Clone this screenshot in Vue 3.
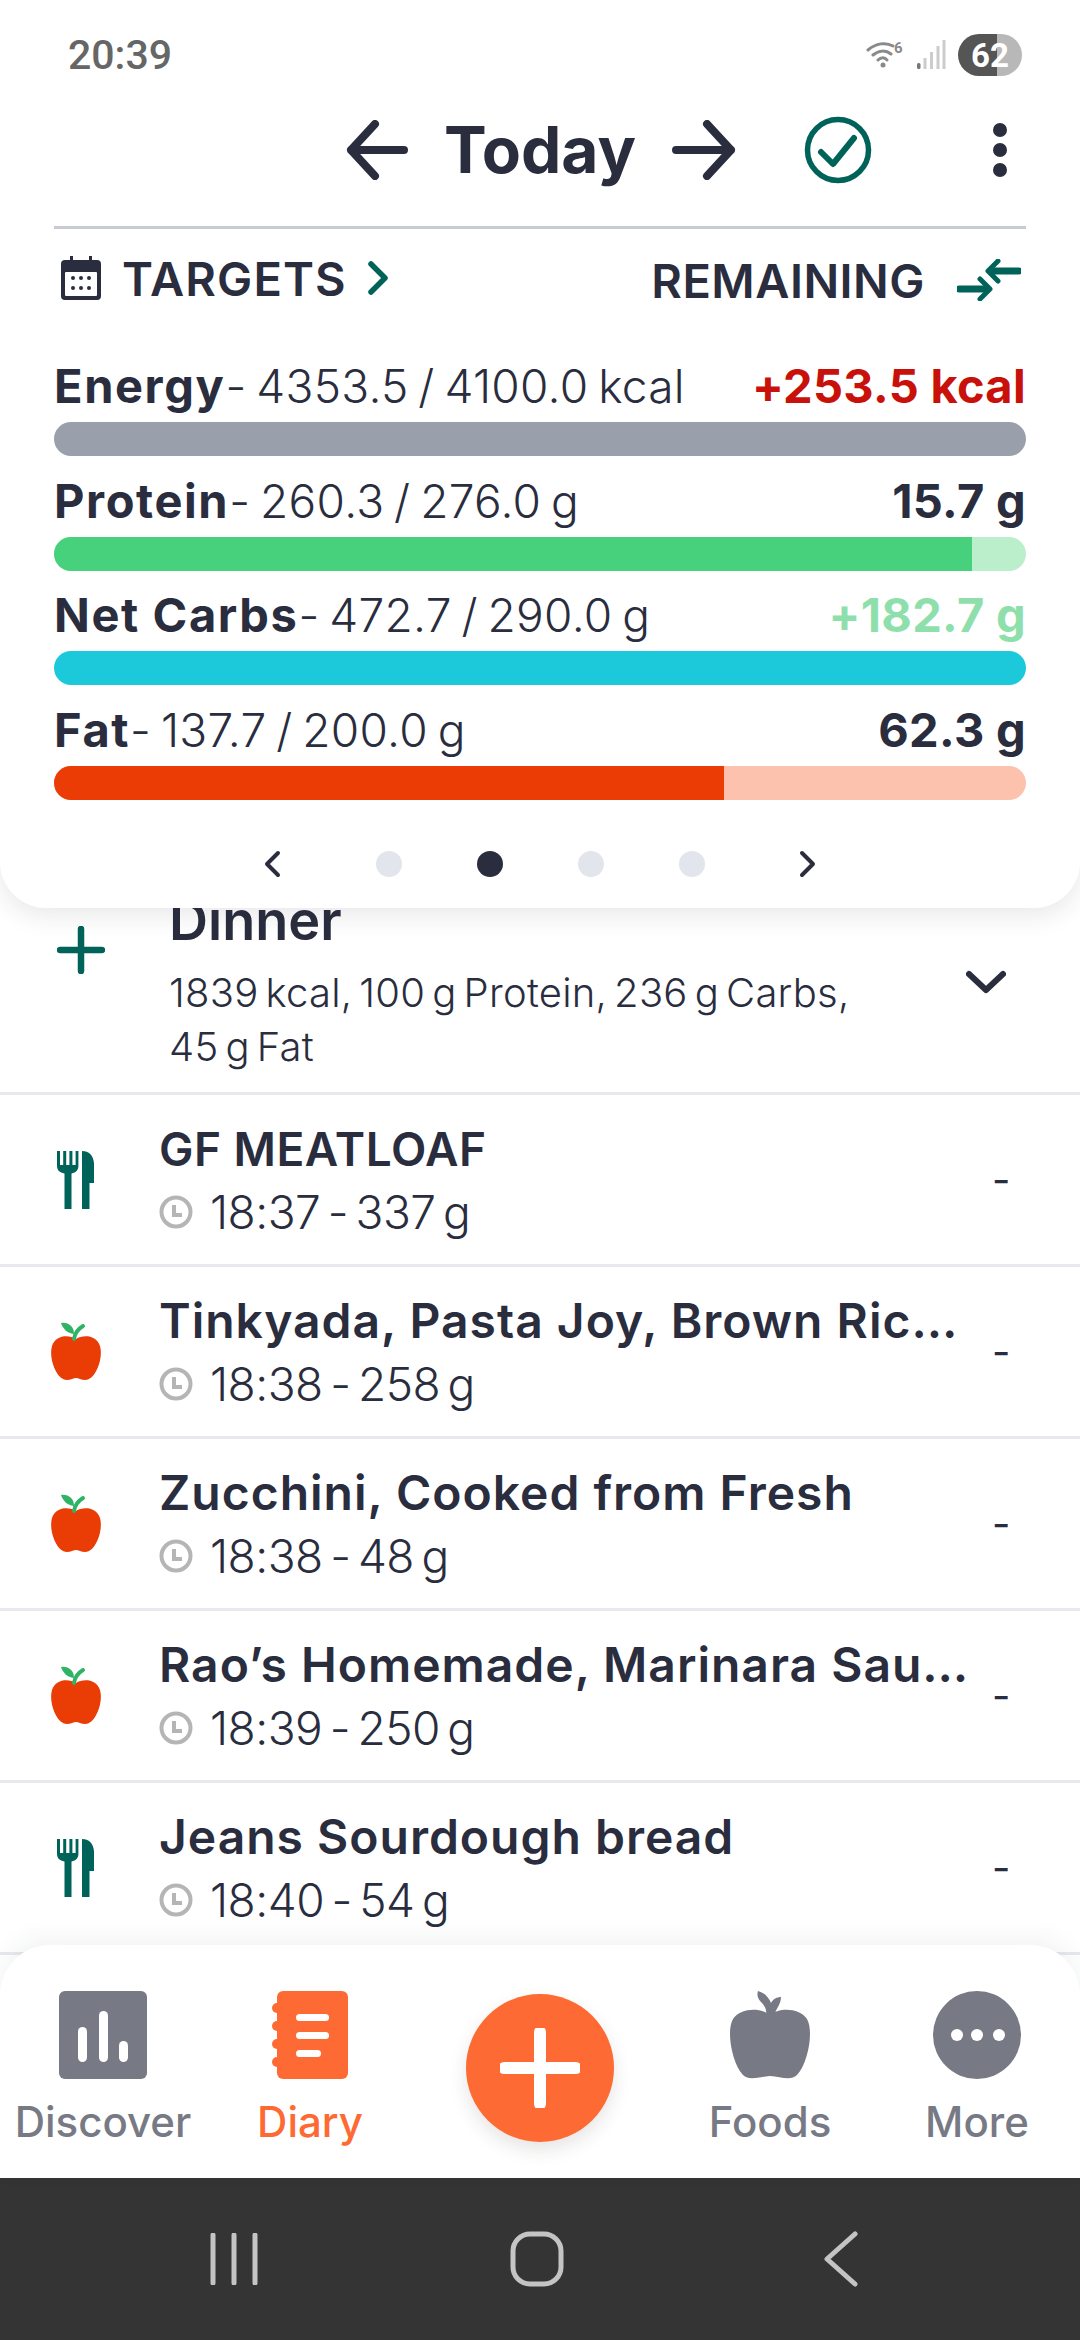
<script setup>
const macros = [
  { name: 'Energy', val: '4353.5 / 4100.0 kcal', rem: '+253.5 kcal', remClass: 'over', color: '#9a9fac', track: '#9a9fac', pct: 100 },
  { name: 'Protein', val: '260.3 / 276.0 g', rem: '15.7 g', remClass: '', color: '#48d17c', track: '#bbeeca', pct: 94.4 },
  { name: 'Net Carbs', val: '472.7 / 290.0 g', rem: '+182.7 g', remClass: 'overgreen', color: '#1cc9da', track: '#1cc9da', pct: 100 },
  { name: 'Fat', val: '137.7 / 200.0 g', rem: '62.3 g', remClass: '', color: '#ec3c05', track: '#fdc2ae', pct: 68.9 }
]
const items = [
  { icon: 'meal', title: 'GF MEATLOAF', meta: '18:37 - 337 g', caps: true },
  { icon: 'apple', title: 'Tinkyada, Pasta Joy, Brown Rice Pasta', meta: '18:38 - 258 g' },
  { icon: 'apple', title: 'Zucchini, Cooked from Fresh', meta: '18:38 - 48 g' },
  { icon: 'apple', title: 'Rao’s Homemade, Marinara Sauce', meta: '18:39 - 250 g' },
  { icon: 'meal', title: 'Jeans Sourdough bread', meta: '18:40 - 54 g' }
]
const dots = [false, true, false, false]
</script>

<template>
  <div class="app">
    <section class="panel">
      <div class="status">
        <span class="time">20:39</span>
        <div class="status-icons">
          <svg class="wifi" width="38" height="30" viewBox="0 0 38 30">
            <path d="M2 10C10 3 20 2 27 6M7 15C13 10 20 10 25 14M12 20C15 17 19 17 21 20" fill="none" stroke="#8a8a8a" stroke-width="3" stroke-linecap="round"/>
            <circle cx="17" cy="25" r="2.5" fill="#8a8a8a"/>
            <text x="28" y="13" class="six">6</text>
          </svg>
          <svg width="30" height="30" viewBox="0 0 30 30">
            <rect x="1" y="23" width="3.5" height="6" rx="1.5" fill="#777"/>
            <rect x="7.5" y="18" width="3" height="11" fill="#ccc"/>
            <rect x="14" y="12" width="3" height="17" fill="#ccc"/>
            <rect x="20.5" y="6" width="3" height="23" fill="#ccc"/>
            <rect x="26.5" y="0" width="3" height="29" fill="#ccc"/>
          </svg>
          <span class="battery">62</span>
        </div>
      </div>

      <header class="head">
        <div class="head-center">
          <svg width="62" height="60" viewBox="0 0 62 60"><path d="M58 30H5M29 4L5 30L29 56" fill="none" stroke="#2a2d3e" stroke-width="8" stroke-linecap="round" stroke-linejoin="round"/></svg>
          <h1>Today</h1>
          <svg width="64" height="60" viewBox="0 0 64 60"><path d="M4 30H59M35 4L59 30L35 56" fill="none" stroke="#2a2d3e" stroke-width="8" stroke-linecap="round" stroke-linejoin="round"/></svg>
        </div>
        <svg class="check" width="68" height="68" viewBox="0 0 68 68"><circle cx="34" cy="34" r="30.5" fill="none" stroke="#00635a" stroke-width="5.5"/><path d="M17 36L29 48L50 22" fill="none" stroke="#00635a" stroke-width="6" stroke-linecap="round" stroke-linejoin="round"/></svg>
        <div class="kebab"><i></i><i></i><i></i></div>
      </header>

      <div class="targets">
        <div class="targets-left">
          <svg width="42" height="46" viewBox="0 0 42 46">
            <path d="M5 5H10V1H13V5H29V1H32V5H37A4 4 0 0 1 41 9V41A4 4 0 0 1 37 45H5A4 4 0 0 1 1 41V9A4 4 0 0 1 5 5Z" fill="#2a2d3e"/>
            <rect x="5" y="17" width="32" height="24" rx="1" fill="#fff"/>
            <g fill="#2a2d3e"><circle cx="13" cy="23" r="2"/><circle cx="21" cy="23" r="2"/><circle cx="29" cy="23" r="2"/><circle cx="13" cy="33" r="2"/><circle cx="21" cy="33" r="2"/><circle cx="29" cy="33" r="2"/></g>
          </svg>
          <span class="tlabel tl-left">TARGETS</span>
          <svg width="22" height="34" viewBox="0 0 22 34"><path d="M4 3L18 17L4 31" fill="none" stroke="#00635a" stroke-width="5.5" stroke-linecap="round" stroke-linejoin="round"/></svg>
        </div>
        <div class="targets-right">
          <span class="tlabel">REMAINING</span>
          <svg width="64" height="42" viewBox="0 0 64 42" fill="none" stroke="#00635a" stroke-linecap="round" stroke-linejoin="round">
            <path d="M62 12H34" stroke-width="7"/><path d="M41 2L31 12L41 22" stroke-width="5"/>
            <path d="M2 30H30" stroke-width="7"/><path d="M23 20L33 30L23 40" stroke-width="5"/>
          </svg>
        </div>
      </div>

      <div class="macros">
        <div v-for="m in macros" :key="m.name" class="macro">
          <div class="macro-top">
            <span class="macro-left"><b>{{ m.name }}</b><span>- {{ m.val }}</span></span>
            <b class="rem" :class="m.remClass">{{ m.rem }}</b>
          </div>
          <div class="bar" :style="{ background: m.track }">
            <div class="fill" :style="{ width: m.pct + '%', background: m.color }"></div>
          </div>
        </div>
      </div>

      <div class="pager">
        <svg width="20" height="28" viewBox="0 0 20 28"><path d="M16 3L5 14L16 25" fill="none" stroke="#2a2d3e" stroke-width="4" stroke-linecap="round" stroke-linejoin="round"/></svg>
        <div class="dots"><span v-for="(d, i) in dots" :key="i" class="dot" :class="{ on: d }"></span></div>
        <svg width="20" height="28" viewBox="0 0 20 28"><path d="M4 3L15 14L4 25" fill="none" stroke="#2a2d3e" stroke-width="4" stroke-linecap="round" stroke-linejoin="round"/></svg>
      </div>
    </section>

    <main class="list">
      <div class="dinner">
        <svg class="plus" width="48" height="48" viewBox="0 0 48 48"><path d="M24 3V45M3 24H45" stroke="#00635a" stroke-width="6.5" stroke-linecap="round"/></svg>
        <div class="dinner-text">
          <div class="dinner-name">Dinner</div>
          <div class="dinner-sub">1839 kcal, 100 g Protein, 236 g Carbs,<br>45 g Fat</div>
        </div>
        <svg class="down" width="40" height="24" viewBox="0 0 40 24"><path d="M3 4L20 20L37 4" fill="none" stroke="#2a2d3e" stroke-width="6" stroke-linecap="round" stroke-linejoin="round"/></svg>
      </div>

      <div v-for="it in items" :key="it.meta" class="row">
        <div class="row-icon">
          <svg v-if="it.icon === 'meal'" class="meal" width="38" height="58" viewBox="0 0 38 58" fill="#00635a">
            <path d="M0 0H3V14H6.2V0H9.2V14H12.4V0H15.4V14H18.6V0H21.4V15C21.4 19 19 21.500 14.500 22.500V58H7.500V22.500C2.500 21.500 0 19 0 15Z"/>
            <path d="M25 0C32 0 36 4 37 12V32H32.500V58H25Z"/>
          </svg>
          <svg v-else class="apple" width="52" height="60" viewBox="0 0 52 60">
            <path d="M26 17C20 13 6 12 2 24C-1 34 4 52 13 57C18 60 23 56 26 56C29 56 34 60 39 57C48 52 53 34 50 24C46 12 32 13 26 17Z" fill="#ea3c05"/>
            <path d="M24 17C25 10 28 7 33 4" fill="none" stroke="#2fb365" stroke-width="4" stroke-linecap="round"/>
            <path d="M24 12C17 11 13 7 11 1C18 0 24 4 24 12Z" fill="#2fb365"/>
          </svg>
        </div>
        <div class="row-text">
          <div class="row-title" :class="{ caps: it.caps }">{{ it.title }}</div>
          <div class="row-meta">
            <svg width="34" height="34" viewBox="0 0 34 34"><circle cx="17" cy="17" r="14.5" fill="none" stroke="#b5b5b5" stroke-width="4"/><path d="M15 10V20H23" fill="none" stroke="#b5b5b5" stroke-width="4"/></svg>
            <span>{{ it.meta }}</span>
          </div>
        </div>
        <span class="row-dash">-</span>
      </div>
    </main>

    <nav class="tabbar">
      <div class="tab">
        <svg width="88" height="88" viewBox="0 0 88 88"><rect width="88" height="88" rx="6" fill="#777a85"/><rect x="19" y="36" width="9" height="35" rx="4.500" fill="#fff"/><rect x="40" y="20" width="9" height="51" rx="4.500" fill="#fff"/><rect x="60" y="50" width="9" height="21" rx="4.500" fill="#fff"/></svg>
        <span>Discover</span>
      </div>
      <div class="tab active">
        <svg width="76" height="88" viewBox="0 0 76 88" fill="#fe6a33">
          <rect x="5" width="71" height="88" rx="6"/><circle cx="5" cy="17" r="5"/><circle cx="5" cy="35" r="5"/><circle cx="5" cy="53" r="5"/><circle cx="5" cy="71" r="5"/>
          <rect x="24" y="23" width="33" height="7" rx="3.500" fill="#fff"/><rect x="24" y="41" width="33" height="7" rx="3.500" fill="#fff"/><rect x="24" y="59" width="25" height="7" rx="3.500" fill="#fff"/>
        </svg>
        <span>Diary</span>
      </div>
      <div class="tab fab-cell">
        <div class="fab"><svg width="80" height="80" viewBox="0 0 80 80"><path d="M40 4V76M4 40H76" stroke="#fff" stroke-width="12" stroke-linecap="round"/></svg></div>
      </div>
      <div class="tab">
        <svg width="82" height="88" viewBox="0 0 82 88" fill="#777a85">
          <path d="M41 24C33 17 12 16 4 28C-3 40 3 72 14 84C20 90 30 86 41 85C52 86 62 90 68 84C79 72 85 40 78 28C70 16 49 17 41 24Z"/>
          <path d="M37 24C38 19 36 15 32 11C28 7 28 3 29 0C36 2 40 7 42 12C44 8 48 6 52 6C52 13 47 18 45 24Z"/>
        </svg>
        <span>Foods</span>
      </div>
      <div class="tab">
        <svg width="88" height="88" viewBox="0 0 88 88"><circle cx="44" cy="44" r="44" fill="#777a85"/><circle cx="24" cy="44" r="6" fill="#fff"/><circle cx="44" cy="44" r="6" fill="#fff"/><circle cx="66" cy="44" r="6" fill="#fff"/></svg>
        <span>More</span>
      </div>
    </nav>

    <footer class="sysnav">
      <svg width="48" height="52" viewBox="0 0 48 52"><path d="M3 2V50M24 2V50M45 2V50" stroke="#c4c4c4" stroke-width="5" stroke-linecap="round"/></svg>
      <svg width="54" height="56" viewBox="0 0 54 56"><rect x="3" y="3" width="48" height="50" rx="17" fill="none" stroke="#c4c4c4" stroke-width="5"/></svg>
      <svg class="back" width="34" height="56" viewBox="0 0 34 56"><path d="M31 3L3 28L31 53" fill="none" stroke="#c4c4c4" stroke-width="5" stroke-linecap="round" stroke-linejoin="round"/></svg>
    </footer>
  </div>
</template>

<style>
html, body { margin: 0; background: #fff; }
</style>

<style scoped>
.app {
  width: 1080px; height: 2340px; display: flex; flex-direction: column; overflow: hidden;
  background: #fff; color: #2a2d3e; font-family: Inter, "Noto Sans", sans-serif;
}
.panel {
  position: relative; z-index: 2; flex: none; height: 908px; box-sizing: border-box; background: #fff;
  border-radius: 0 0 46px 46px; box-shadow: 0 8px 24px rgba(40, 44, 60, .1);
  padding: 0 54px;
}
.status { height: 110px; display: flex; justify-content: space-between; align-items: center; padding: 0 0 0 14px; }
.time { font: 500 41px Roboto, sans-serif; color: #666; }
.status-icons { display: flex; align-items: center; gap: 12px; margin-right: 4px; }
.six { font: 700 15px Roboto, sans-serif; fill: #8a8a8a; }
.battery {
  width: 64px; height: 42px; border-radius: 21px; display: flex; align-items: center; justify-content: center;
  background: linear-gradient(90deg, #555 61%, #b8b8b8 61%); color: #fff; font: 700 33px Roboto, sans-serif;
}
.head { height: 80px; display: flex; align-items: center; position: relative; padding-left: 292px; }
.head-center { display: flex; align-items: center; gap: 36px; }
.head h1 { margin: 0; font-size: 64px; font-weight: 700; line-height: 80px; }
.check { margin-left: 68px; }
.kebab { margin-left: 121px; display: flex; flex-direction: column; gap: 6px; }
.kebab i { width: 14px; height: 14px; border-radius: 50%; background: #2a2d3e; display: block; }
.targets {
  border-top: 3px solid #c9cbd4; margin-top: 36px; height: 72px; padding-top: 13px;
  display: flex; justify-content: space-between; align-items: center;
}
.targets-left, .targets-right { display: flex; align-items: center; }
.targets-left { padding-left: 6px; gap: 20px; }
.targets-right { gap: 32px; padding-right: 5px; padding-top: 4px; }
.tlabel { font-size: 47px; font-weight: 600; letter-spacing: 0.5px; }
.tl-left { letter-spacing: 1.1px; }
.macros { margin-top: 44px; display: flex; flex-direction: column; gap: 16.6px; }
.macro-top { height: 56px; display: flex; justify-content: space-between; align-items: center; font-size: 47px; line-height: 56px; }
.macro-left { display: flex; white-space: pre; }
.macro-left b { font-weight: 700; letter-spacing: 1.6px; }
.macro-left span { font-weight: 350; font-size: 46px; letter-spacing: 0.3px; word-spacing: -3.5px; }
.rem { font-weight: 700; letter-spacing: 0.3px; }
.over { color: #c9110c; }
.overgreen { color: #8fdfac; }
.bar { height: 34px; margin-top: 8px; border-radius: 17px; overflow: hidden; }
.fill { height: 100%; }
.pager { margin-top: 50px; display: flex; align-items: center; padding-left: 208px; }
.dots { display: flex; gap: 75px; margin: 0 auto 0 0; padding-left: 94px; }
.dot { width: 26px; height: 26px; border-radius: 50%; background: #e3e5ed; }
.dot.on { background: #2a2d3e; }
.pager > svg:last-child { margin-right: 208px; }
.list { flex: 1; min-height: 0; margin-bottom: -30px; overflow: hidden; margin-top: -30px; }
.dinner {
  height: 217px; box-sizing: border-box; border-bottom: 3px solid #e7e9ee; display: flex; align-items: flex-start; position: relative;
}
.plus { margin: 48px 0 0 57px; flex: none; }
.dinner-text { margin: 0 0 0 64px; }
.dinner-name { font-size: 54px; font-weight: 600; line-height: 60px; margin-top: 13px; }
.dinner-sub { font-size: 40px; line-height: 54px; margin-top: 15px; white-space: nowrap; font-weight: 350; letter-spacing: 0.25px; word-spacing: -4.5px; }
.down { position: absolute; left: 966px; top: 92px; }
.row { height: 172px; box-sizing: border-box; border-bottom: 3px solid #e7e9ee; display: flex; align-items: center; }
.row-icon { width: 159px; flex: none; display: flex; align-items: center; }
.meal { margin-left: 57px; }
.apple { margin-left: 50px; }
.row-text { width: 812px; flex: none; padding-top: 2px; }
.row-title { font-size: 48px; font-weight: 600; letter-spacing: 1px; line-height: 58px; white-space: nowrap; overflow: hidden; text-overflow: ellipsis; }
.row-title.caps { font-size: 46px; letter-spacing: 0.5px; }
.row-meta { display: flex; align-items: center; gap: 17px; font-size: 46px; font-weight: 350; line-height: 60px; margin-top: 4px; letter-spacing: -0.5px; word-spacing: -5px; }
.row-dash { margin-left: 21px; font-size: 40px; }
.tabbar {
  position: relative; z-index: 3; flex: none; height: 233px; box-sizing: border-box; background: #fff; padding-top: 46px;
  border-radius: 50px 50px 0 0; box-shadow: 0 -8px 24px rgba(40, 44, 60, .06);
  display: grid; grid-template-columns: 206px 208px 252px 208px 206px; align-items: start;
}
.tab { display: flex; flex-direction: column; align-items: center; font-size: 42px; font-weight: 500; color: #777a85; }
.tab span { line-height: 56px; margin-top: 15px; }
.tab.active { color: #fe6a33; }
.fab-cell { padding-top: 3px; }
.fab { width: 148px; height: 148px; border-radius: 50%; background: #fe6a33; display: flex; align-items: center; justify-content: center; box-shadow: 0 8px 18px rgba(60, 40, 30, .12); }
.sysnav {
  flex: none; height: 162px; background: #343434; display: flex; align-items: center;
  padding-left: 210px; gap: 252px;
}
.back { margin-left: 8px; }
</style>
